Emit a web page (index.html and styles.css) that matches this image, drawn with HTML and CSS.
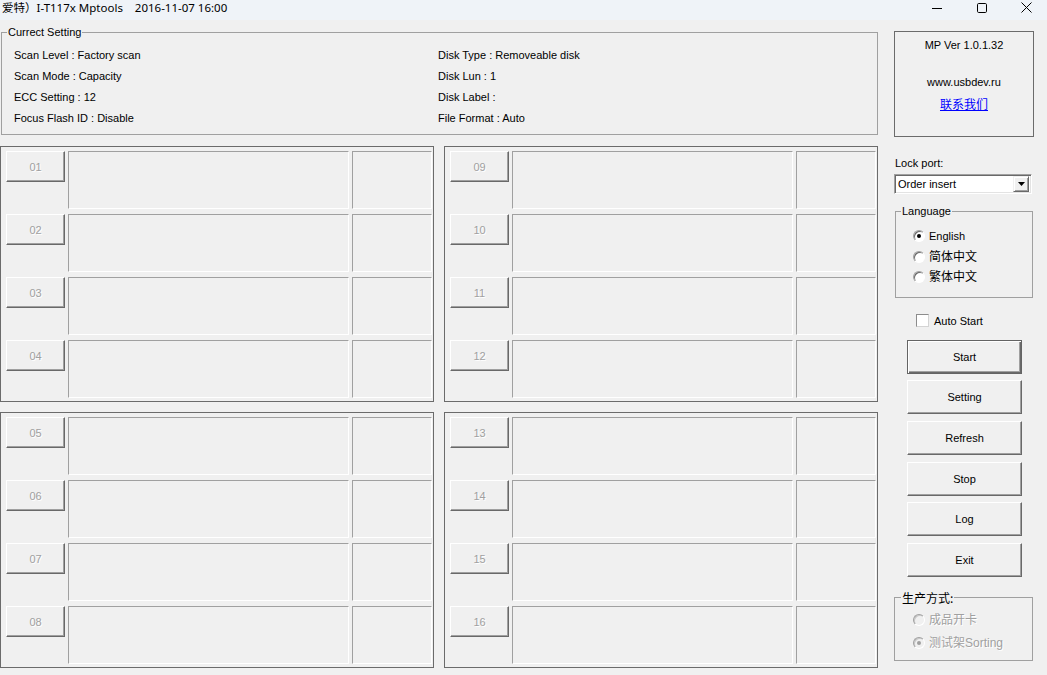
FILE: index.html
```html
<!DOCTYPE html>
<html lang="en">
<head>
    <meta charset="UTF-8">
    <meta name="viewport" content="width=device-width, initial-scale=1.0">
    <title>I-T117x Mptools</title>
    <link rel="stylesheet" href="styles.css">
</head>
<body>
    <div class="titlebar">
        <span class="title">爱特）I-T117x Mptools    2016-11-07 16:00</span>
        <div class="win-controls">
            <span class="wc"><svg width="10" height="10" viewBox="0 0 10 10"><path d="M0 5.5h10" stroke="#000" stroke-width="1"/></svg></span>
            <span class="wc"><svg width="10" height="10" viewBox="0 0 10 10"><rect x="0.5" y="0.5" width="9" height="9" rx="1.2" fill="none" stroke="#000" stroke-width="1"/></svg></span>
            <span class="wc"><svg width="11" height="11" viewBox="0 0 11 11"><path d="M0.5 0.5l10 10M10.5 0.5l-10 10" stroke="#000" stroke-width="1"/></svg></span>
        </div>
    </div>

    <div class="client">
        <div class="left">
            <fieldset class="group current">
                <legend>Currect Setting</legend>
                <div class="settings">
                    <div>Scan Level : Factory scan</div>
                    <div>Disk Type : Removeable disk</div>
                    <div>Scan Mode : Capacity</div>
                    <div>Disk Lun : 1</div>
                    <div>ECC Setting : 12</div>
                    <div>Disk Label :</div>
                    <div>Focus Flash ID : Disable</div>
                    <div>File Format : Auto</div>
                </div>
            </fieldset>

            <div class="ports">
                <div class="port-panel">
                    <div class="port"><div class="port-btn">01</div><div class="port-box"></div><div class="port-state"></div></div>
                    <div class="port"><div class="port-btn">02</div><div class="port-box"></div><div class="port-state"></div></div>
                    <div class="port"><div class="port-btn">03</div><div class="port-box"></div><div class="port-state"></div></div>
                    <div class="port"><div class="port-btn">04</div><div class="port-box"></div><div class="port-state"></div></div>
                </div>
                <div class="port-panel">
                    <div class="port"><div class="port-btn">09</div><div class="port-box"></div><div class="port-state"></div></div>
                    <div class="port"><div class="port-btn">10</div><div class="port-box"></div><div class="port-state"></div></div>
                    <div class="port"><div class="port-btn">11</div><div class="port-box"></div><div class="port-state"></div></div>
                    <div class="port"><div class="port-btn">12</div><div class="port-box"></div><div class="port-state"></div></div>
                </div>
                <div class="port-panel">
                    <div class="port"><div class="port-btn">05</div><div class="port-box"></div><div class="port-state"></div></div>
                    <div class="port"><div class="port-btn">06</div><div class="port-box"></div><div class="port-state"></div></div>
                    <div class="port"><div class="port-btn">07</div><div class="port-box"></div><div class="port-state"></div></div>
                    <div class="port"><div class="port-btn">08</div><div class="port-box"></div><div class="port-state"></div></div>
                </div>
                <div class="port-panel">
                    <div class="port"><div class="port-btn">13</div><div class="port-box"></div><div class="port-state"></div></div>
                    <div class="port"><div class="port-btn">14</div><div class="port-box"></div><div class="port-state"></div></div>
                    <div class="port"><div class="port-btn">15</div><div class="port-box"></div><div class="port-state"></div></div>
                    <div class="port"><div class="port-btn">16</div><div class="port-box"></div><div class="port-state"></div></div>
                </div>
            </div>
        </div>

        <div class="side">
            <div class="info">
                <div class="ver">MP Ver 1.0.1.32</div>
                <div class="site">www.usbdev.ru</div>
                <a class="contact" href="#">联系我们</a>
            </div>

            <div class="lock-label">Lock port:</div>
            <div class="combo">
                <span class="combo-text">Order insert</span>
                <span class="combo-btn"><svg width="7" height="4" viewBox="0 0 7 4"><path d="M0 0h7L3.5 4z" fill="#000"/></svg></span>
            </div>

            <fieldset class="group lang">
                <legend>Language</legend>
                <div class="options">
                    <div class="radio"><span class="dot checked"></span>English</div>
                    <div class="radio cjk"><span class="dot"></span>简体中文</div>
                    <div class="radio cjk"><span class="dot"></span>繁体中文</div>
                </div>
            </fieldset>

            <div class="check"><span class="box"></span>Auto Start</div>

            <div class="buttons">
                <div class="btn default">Start</div>
                <div class="btn">Setting</div>
                <div class="btn">Refresh</div>
                <div class="btn">Stop</div>
                <div class="btn">Log</div>
                <div class="btn">Exit</div>
            </div>

            <fieldset class="group mode">
                <legend>生产方式:</legend>
                <div class="options">
                    <div class="radio cjk disabled"><span class="dot"></span>成品开卡</div>
                    <div class="radio cjk disabled"><span class="dot checked"></span>测试架Sorting</div>
                </div>
            </fieldset>
        </div>
    </div>
</body>
</html>
```

FILE: styles.css
```css
* {
    box-sizing: border-box;
}
body {
    margin: 0;
    width: 1047px;
    height: 675px;
    overflow: hidden;
    background-color: #f0f0f0;
    color: #000000;
    font-family: "Liberation Sans", Tahoma, Arial, sans-serif;
    font-size: 11px;
}

/* title bar */
.titlebar {
    height: 20px;
    background-color: #eff3f8;
    display: flex;
    align-items: flex-start;
}
.title {
    padding-left: 2px;
    font-family: "Noto Sans", "Noto Sans CJK SC", sans-serif;
    font-size: 11.5px;
    line-height: 15px;
    white-space: pre;
}
.win-controls {
    margin-left: auto;
    margin-right: -2px;
    display: flex;
}
.wc {
    width: 45px;
    height: 15px;
    display: flex;
    justify-content: center;
    align-items: center;
}

.client {
    display: flex;
}

/* group boxes */
.group {
    margin: 0;
    padding: 0;
    border: 1px solid #a0a0a0;
    min-width: 0;
}
.group legend {
    margin-left: 5px;
    padding: 0 1px;
    line-height: 13px;
}

.left {
    width: 878px;
    padding-top: 6px;
}
.current {
    margin-left: 1px;
    width: 877px;
}
.settings {
    display: grid;
    grid-template-columns: 424px 1fr;
    line-height: 21px;
    padding: 6px 0 5px 12px;
}

/* port panels */
.ports {
    margin-top: 11px;
    display: grid;
    grid-template-columns: 434px 434px;
    grid-template-rows: 256px 256px;
    gap: 10px;
}
.port-panel {
    border: 1px solid #6b6b6b;
    padding: 4px 1px 3px 5px;
    display: flex;
    flex-direction: column;
    gap: 5px;
}
.port {
    display: flex;
    gap: 3px;
    height: 58px;
}
.port-btn {
    width: 59px;
    height: 31px;
    border: 1px solid;
    border-color: #ffffff #696969 #696969 #ffffff;
    box-shadow: inset -1px -1px #a0a0a0;
    color: #a0a0a0;
    text-shadow: 1px 1px #ffffff;
    display: flex;
    justify-content: center;
    align-items: center;
}
.port-box, .port-state {
    border: 1px solid;
    border-color: #a0a0a0 #ffffff #ffffff #a0a0a0;
}
.port-box {
    width: 281px;
}
.port-state {
    width: 80px;
}

/* right side */
.side {
    margin-left: 16px;
    width: 140px;
    padding-top: 11px;
}
.info {
    height: 106px;
    border: 1px solid #6b6b6b;
    padding-top: 6px;
    display: flex;
    flex-direction: column;
    align-items: center;
    line-height: 14px;
}
.site {
    margin-top: 23px;
}
.contact {
    margin-top: 7px;
    color: #0000ff;
    font-family: "Noto Sans CJK SC", sans-serif;
    font-size: 12px;
    line-height: 16px;
}
.lock-label {
    margin: 19px 0 0 1px;
    line-height: 14px;
}
.combo {
    margin-top: 4px;
    width: 138px;
    height: 20px;
    background-color: #ffffff;
    border: 1px solid;
    border-color: #a0a0a0 #ffffff #ffffff #a0a0a0;
    box-shadow: inset 1px 1px #696969, inset -1px -1px #e3e3e3;
    display: flex;
    align-items: center;
    padding: 0 2px 0 3px;
}
.combo-text {
    flex: 1;
}
.combo-btn {
    width: 16px;
    height: 16px;
    background-color: #f0f0f0;
    border: 1px solid;
    border-color: #f0f0f0 #696969 #696969 #f0f0f0;
    box-shadow: inset 1px 1px #ffffff, inset -1px -1px #a0a0a0;
    display: flex;
    justify-content: center;
    align-items: center;
}

.lang {
    margin: 11px 0 0 1px;
    width: 138px;
}
.lang .options {
    padding: 8px 0 9px 17px;
}
.lang .radio {
    line-height: 20.5px;
}
.mode {
    margin-top: 13px;
    width: 139px;
}
.mode legend {
    margin-left: 6px;
    font-family: "Noto Sans CJK SC", sans-serif;
    font-size: 12px;
    line-height: 16px;
}
.mode .options {
    padding: 4px 0 7px 18px;
}
.mode .radio + .radio {
    margin-top: 3px;
}

.radio {
    display: flex;
    align-items: center;
    gap: 4px;
    line-height: 20px;
}
.radio.cjk {
    font-family: "Liberation Sans", "Noto Sans CJK SC", sans-serif;
    font-size: 12px;
}
.radio.disabled {
    color: #a0a0a0;
    text-shadow: 1px 1px #ffffff;
}
.dot {
    width: 12px;
    height: 12px;
    border-radius: 50%;
    border: 1px solid;
    border-color: #a0a0a0 #ffffff #ffffff #a0a0a0;
    box-shadow: inset 1px 1px #696969;
    background-color: #ffffff;
    display: flex;
    justify-content: center;
    align-items: center;
}
.dot.checked::after {
    content: "";
    width: 4px;
    height: 4px;
    border-radius: 50%;
    background-color: #000000;
}
.disabled .dot {
    background-color: #f0f0f0;
    box-shadow: inset 1px 1px #c8c8c8;
}
.disabled .dot.checked::after {
    background-color: #a0a0a0;
}

.check {
    margin: 16px 0 0 22px;
    display: flex;
    align-items: center;
    gap: 5px;
    line-height: 14px;
}
.check .box {
    width: 13px;
    height: 13px;
    background-color: #ffffff;
    border: 1px solid;
    border-color: #8c8c8c #d4d4d4 #d4d4d4 #8c8c8c;
}

.buttons {
    margin: 12px 0 0 13px;
    width: 115px;
    display: flex;
    flex-direction: column;
    gap: 6.7px;
}
.btn {
    height: 34px;
    border: 1px solid;
    border-color: #ffffff #696969 #696969 #ffffff;
    box-shadow: inset -1px -1px #a0a0a0;
    display: flex;
    justify-content: center;
    align-items: center;
}
.btn.default {
    border-color: #646464;
    box-shadow: inset 1px 1px #ffffff, inset -1px -1px #696969, inset -2px -2px #a0a0a0;
}
```
